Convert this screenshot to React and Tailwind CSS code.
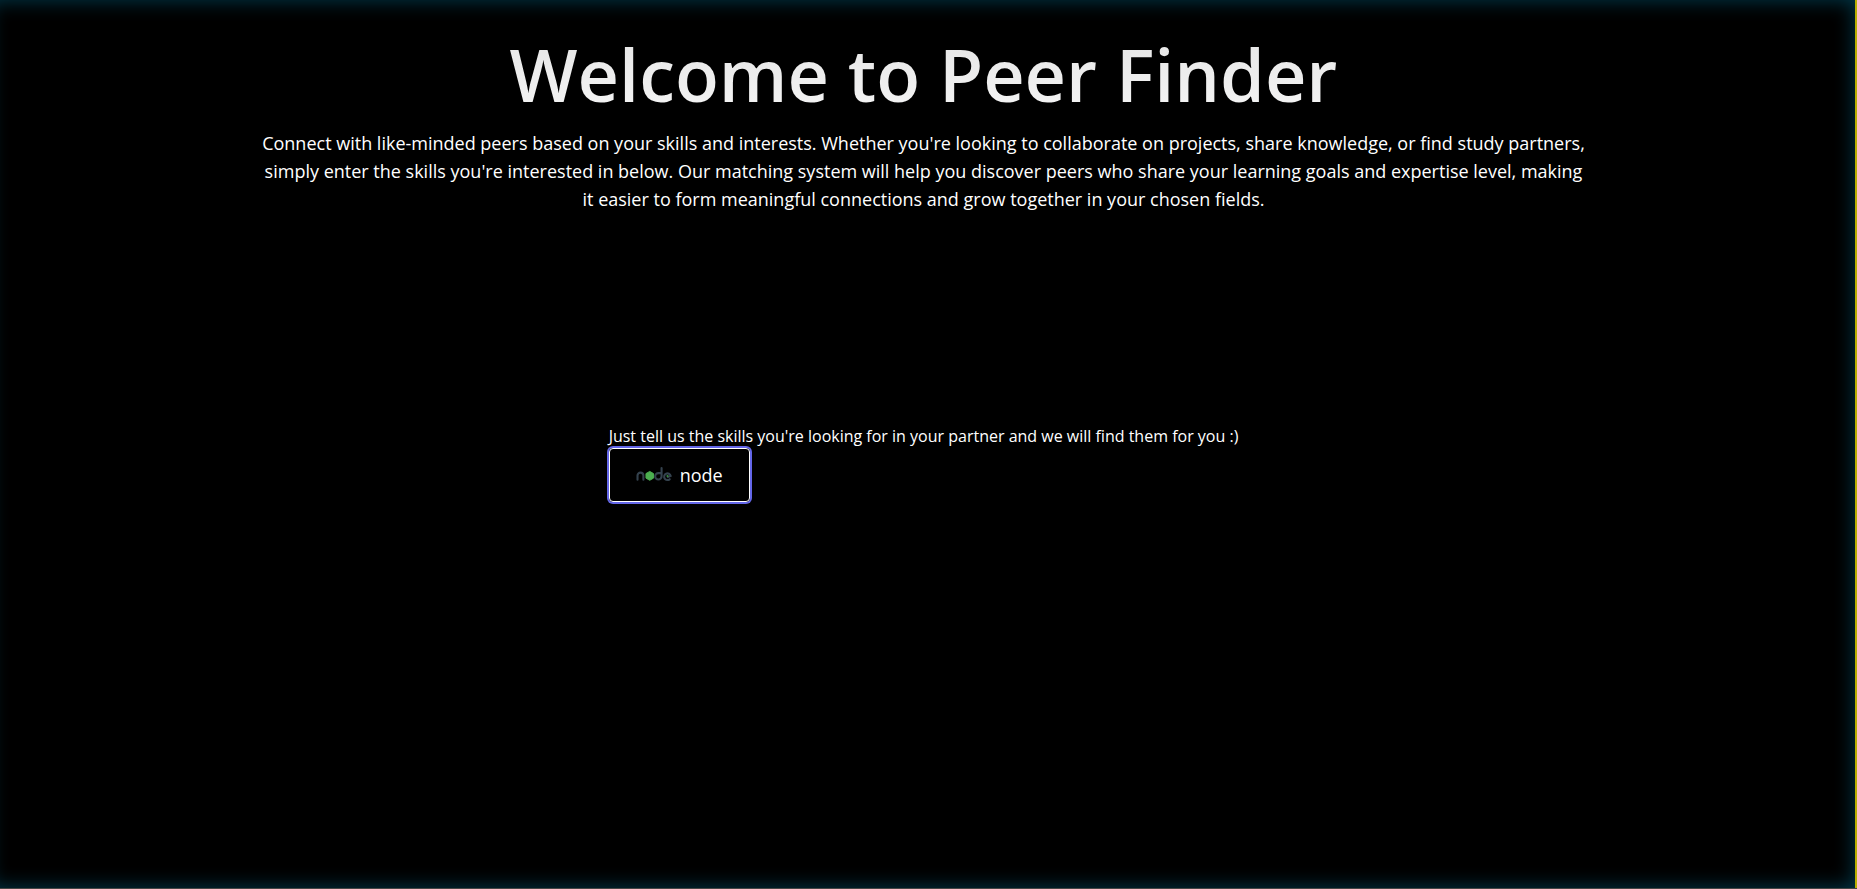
function NodeLogo() {
  return (
    <svg viewBox="0 0 38 18" className="h-[18px] w-9" fill="none" aria-hidden="true">
      <g stroke="#34424e" strokeWidth="2.2" strokeLinecap="round">
        <path d="M1.6 14V9.6a3.1 3.1 0 0 1 6.2 0V14" />
        <path d="M27 1.6v8.8a3.4 3.4 0 1 1-3.4-3.4h3" />
        <path d="M35.6 13.4a3.5 3.5 0 1 1 1-3.4l-3 1.2" />
      </g>
      <path d="M14.5 5.2l4 2.3v4.8l-4 2.3-4-2.3V7.5z" fill="#4caf50" stroke="#4caf50" strokeLinejoin="round" />
      <circle cx="33.2" cy="10" r="1.1" fill="#388e3c" />
    </svg>
  );
}

export default function App() {
  return (
    <div className="flex min-h-screen overflow-hidden border-b border-[#454545] bg-black font-['Open_Sans',sans-serif] text-white">
      <main className="-ml-3 flex flex-1 flex-col items-center pt-8 pr-6 pl-7 shadow-[inset_0_0_20px_#003d50]">
        <h1 className="bg-gradient-to-b from-neutral-200 to-neutral-100 bg-clip-text text-center text-7xl leading-[84px] font-semibold text-transparent">
          Welcome to Peer Finder
        </h1>
        <p className="mt-[13px] max-w-[1328px] text-center text-lg leading-7">
          Connect with like-minded peers based on your skills and interests. Whether you're looking to collaborate on projects, share knowledge, or find study partners, simply enter the skills you're interested in below. Our matching system will help you discover peers who share your learning goals and expertise level, making it easier to form meaningful connections and grow together in your chosen fields.
        </p>
        <section className="mt-[211px] flex flex-col items-start">
          <p className="text-base leading-6">
            Just tell us the skills you're looking for in your partner and we will find them for you :)
          </p>
          <button type="button" className="flex h-[54px] items-center gap-2 rounded-sm border border-white px-[26px] text-lg leading-7 ring-2 ring-[#6366e8]">
            <NodeLogo />
            node
          </button>
        </section>
      </main>
      <div className="w-0.5 bg-[#b8ae00]" />
    </div>
  );
}
